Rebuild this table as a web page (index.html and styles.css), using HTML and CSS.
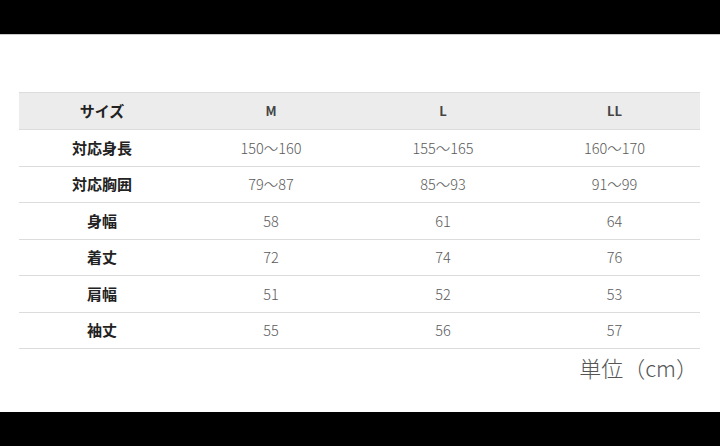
FILE: index.html
```html
<!DOCTYPE html>
<html lang="ja">
<head>
<meta charset="utf-8">
<title>サイズ表</title>
<link rel="stylesheet" href="styles.css">
</head>
<body>
<div class="bar bar-top"></div>
<main class="content">
  <div class="size-table">
    <div class="row head">
      <div class="cell label">サイズ</div>
      <div class="cell size">M</div>
      <div class="cell size">L</div>
      <div class="cell size">LL</div>
    </div>
    <div class="row">
      <div class="cell label">対応身長</div>
      <div class="cell num">150〜160</div>
      <div class="cell num">155〜165</div>
      <div class="cell num">160〜170</div>
    </div>
    <div class="row">
      <div class="cell label">対応胸囲</div>
      <div class="cell num">79〜87</div>
      <div class="cell num">85〜93</div>
      <div class="cell num">91〜99</div>
    </div>
    <div class="row">
      <div class="cell label">身幅</div>
      <div class="cell num">58</div>
      <div class="cell num">61</div>
      <div class="cell num">64</div>
    </div>
    <div class="row">
      <div class="cell label">着丈</div>
      <div class="cell num">72</div>
      <div class="cell num">74</div>
      <div class="cell num">76</div>
    </div>
    <div class="row">
      <div class="cell label">肩幅</div>
      <div class="cell num">51</div>
      <div class="cell num">52</div>
      <div class="cell num">53</div>
    </div>
    <div class="row">
      <div class="cell label">袖丈</div>
      <div class="cell num">55</div>
      <div class="cell num">56</div>
      <div class="cell num">57</div>
    </div>
  </div>
  <p class="unit">単位（cm）</p>
</main>
<div class="bar bar-bottom"></div>
</body>
</html>
```

FILE: styles.css
```css
html, body {
  margin: 0;
  padding: 0;
  background: #ffffff;
}
body {
  width: 720px;
  height: 446px;
  display: flex;
  flex-direction: column;
  font-family: "Noto Sans CJK JP", "Noto Sans", sans-serif;
  overflow: hidden;
}
.bar {
  background: #000000;
  flex: none;
}
.bar-top {
  height: 34px;
  border-bottom: 1px solid #c8c8c8;
}
.bar-bottom {
  height: 34px;
}
.content {
  flex: 1;
  padding: 57px 20px 0 19px;
  display: flex;
  flex-direction: column;
}
.size-table {
  display: flex;
  flex-direction: column;
}
.row {
  display: grid;
  grid-template-columns: 166px 172px 172px 1fr;
  height: 36.5px;
  box-sizing: border-box;
  border-bottom: 1px solid #dcdcdc;
  align-items: center;
}
.row.head {
  height: 38px;
  background: #ececec;
  border-top: 1px solid #dcdcdc;
}
.cell {
  text-align: center;
  line-height: 20px;
}
.label {
  font-size: 15px;
  font-weight: 700;
  color: #222222;
}
.size {
  font-size: 13px;
  font-weight: 700;
  color: #444444;
}
.num {
  font-size: 14.5px;
  font-weight: 300;
  color: #5a5a5a;
}
.unit {
  margin: 3px 2px 0 0;
  text-align: right;
  font-size: 22px;
  font-weight: 300;
  line-height: 30px;
  color: #555555;
}
```
